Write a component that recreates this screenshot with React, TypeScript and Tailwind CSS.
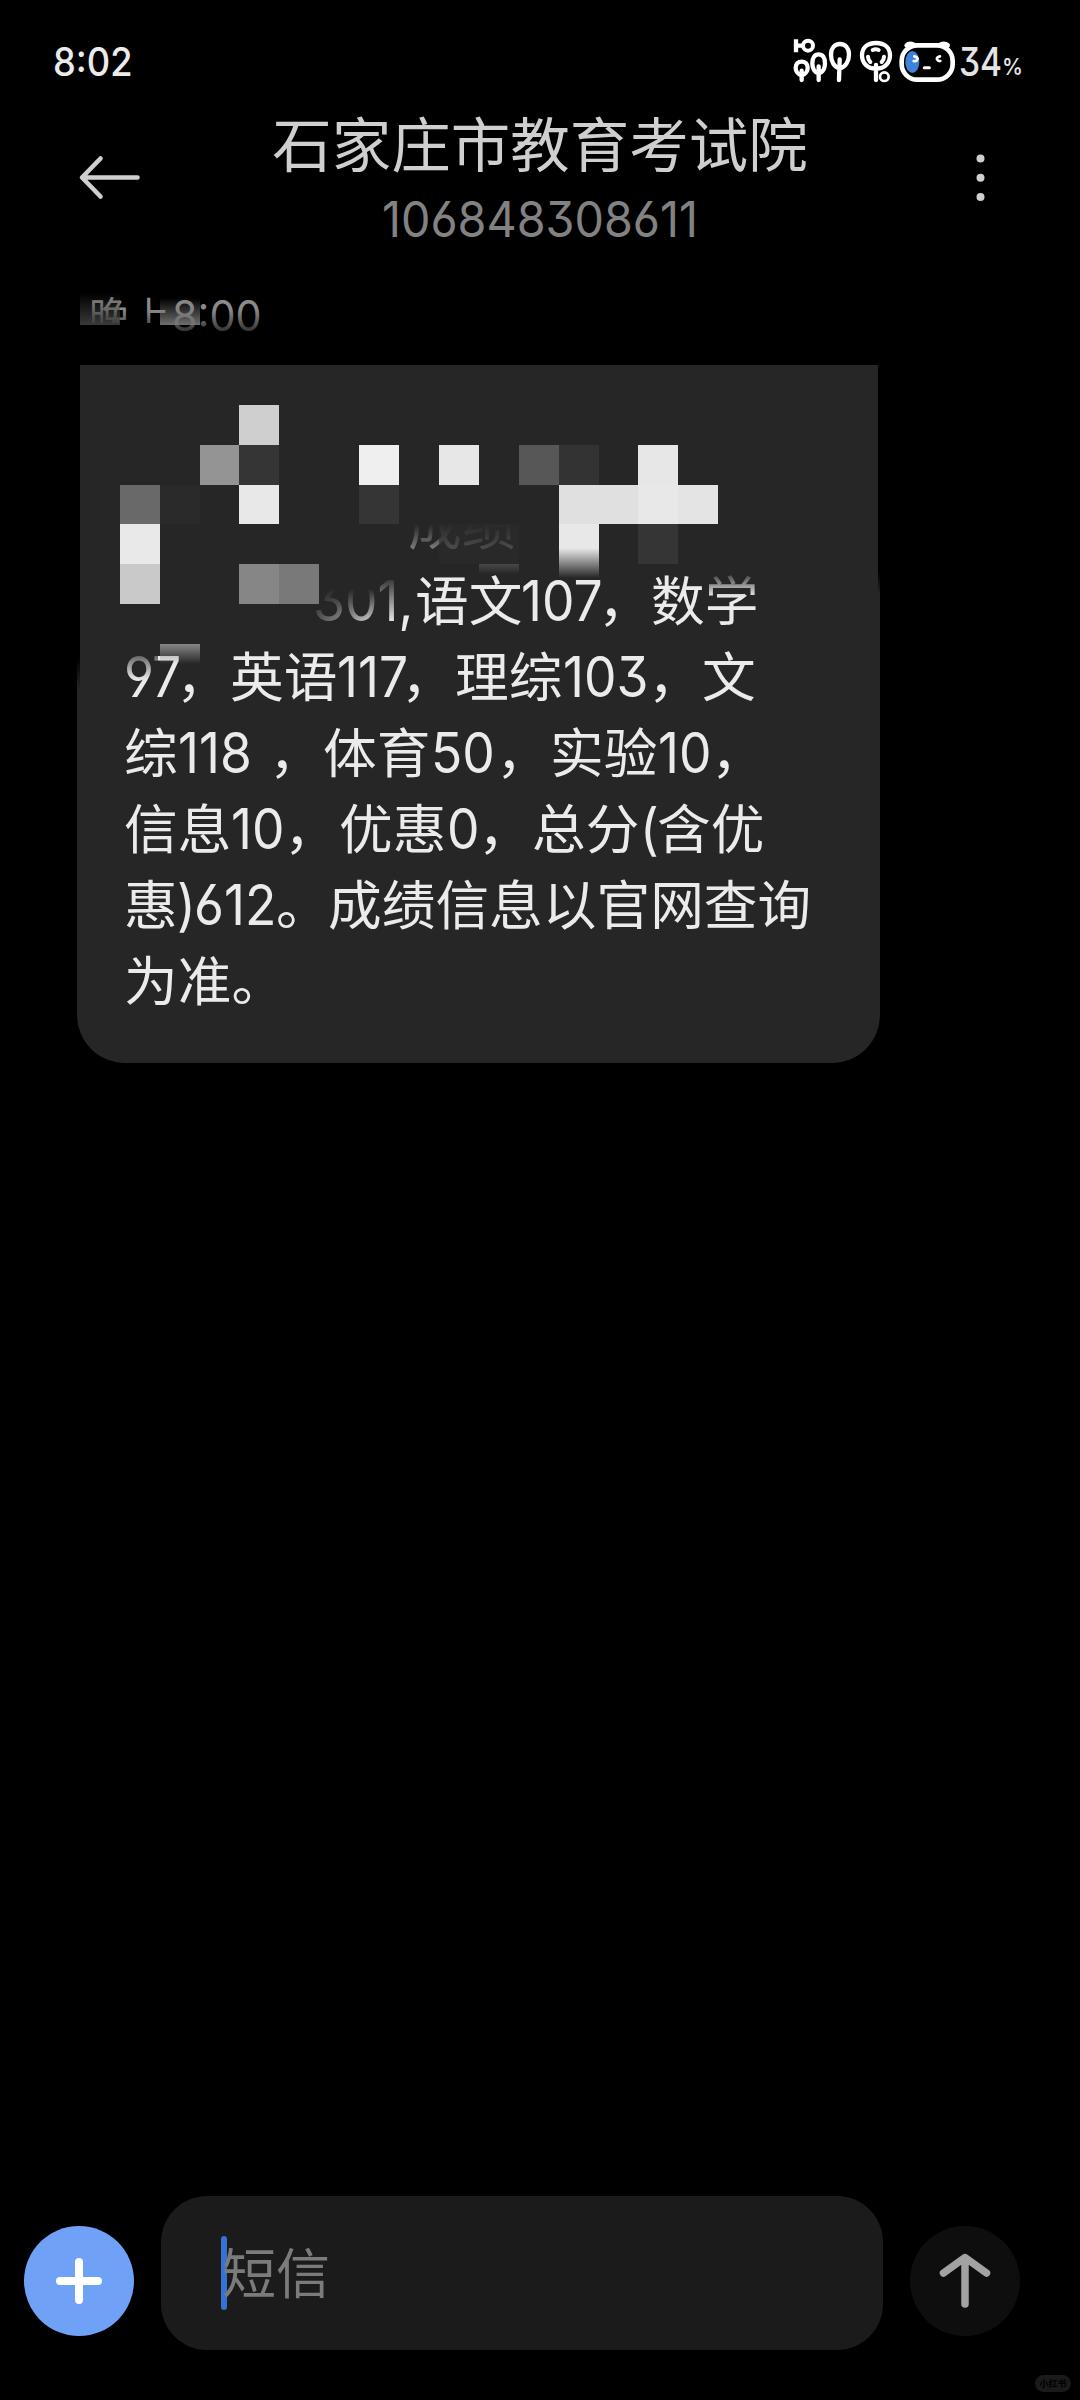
import type { ReactNode } from 'react';
import clsx from 'clsx';

interface Segment {
    text: string;
    width: string;
    latin?: boolean;
}

interface MosaicCell {
    x: number;
    y: number;
    w: number;
    h: number;
    fill: string;
}

const COMMA = '\uff0c';

const MESSAGE_LINES: Segment[][] = [
    [],
    [
        { text: '', width: 'w-[284px]' },
        { text: '成绩', width: 'w-[110px]' }
    ],
    [
        { text: '', width: 'w-[189px]' },
        { text: '301,', width: 'w-[102px]', latin: true },
        { text: '语文', width: 'w-[106px]' },
        { text: '107', width: 'w-[80px]', latin: true },
        { text: COMMA, width: 'w-[50px]' },
        { text: '数学', width: 'w-[110px]' }
    ],
    [
        { text: '97', width: 'w-[55px]', latin: true },
        { text: COMMA, width: 'w-[51px]' },
        { text: '英语', width: 'w-[107px]' },
        { text: '117', width: 'w-[67px]', latin: true },
        { text: COMMA, width: 'w-[51px]' },
        { text: '理综', width: 'w-[108px]' },
        { text: '103', width: 'w-[88px]', latin: true },
        { text: COMMA, width: 'w-[51px]' },
        { text: '文', width: 'w-[54px]' }
    ],
    [
        { text: '综', width: 'w-[54px]' },
        { text: '118', width: 'w-[94px]', latin: true },
        { text: COMMA, width: 'w-[51px]' },
        { text: '体育', width: 'w-[108px]' },
        { text: '50', width: 'w-[68px]', latin: true },
        { text: COMMA, width: 'w-[51px]' },
        { text: '实验', width: 'w-[108px]' },
        { text: '10', width: 'w-[56px]', latin: true },
        { text: COMMA, width: 'w-[51px]' }
    ],
    [
        { text: '信息', width: 'w-[107px]' },
        { text: '10', width: 'w-[56px]', latin: true },
        { text: COMMA, width: 'w-[52px]' },
        { text: '优惠', width: 'w-[108px]' },
        { text: '0', width: 'w-[34px]', latin: true },
        { text: COMMA, width: 'w-[51px]' },
        { text: '总分', width: 'w-[108px]' },
        { text: '(', width: 'w-[17px]', latin: true },
        { text: '含优', width: 'w-[108px]' }
    ],
    [
        { text: '惠', width: 'w-[53px]' },
        { text: ')', width: 'w-[17px]', latin: true },
        { text: '612', width: 'w-[82px]', latin: true },
        { text: '。', width: 'w-[52px]' },
        { text: '成绩信息以官网查询', width: 'w-[490px]' }
    ],
    [{ text: '为准。', width: 'w-[165px]' }]
];

// Coordinates are relative to the bubble's top-left corner (77, 365)
const MOSAIC: MosaicCell[] = [
    { x: 162, y: 40, w: 40, h: 40, fill: '#cfcfcf' },
    { x: 123, y: 80, w: 39, h: 40, fill: '#949494' },
    { x: 162, y: 80, w: 40, h: 40, fill: '#353535' },
    { x: 282, y: 80, w: 40, h: 40, fill: '#efefef' },
    { x: 362, y: 80, w: 40, h: 40, fill: '#e7e7e7' },
    { x: 442, y: 80, w: 40, h: 40, fill: '#575757' },
    { x: 482, y: 80, w: 40, h: 40, fill: '#333333' },
    { x: 561, y: 80, w: 40, h: 40, fill: '#e7e7e7' },
    { x: 43, y: 120, w: 40, h: 39, fill: '#696969' },
    { x: 83, y: 120, w: 40, h: 39, fill: '#2a2a2a' },
    { x: 162, y: 120, w: 40, h: 39, fill: '#e8e8e8' },
    { x: 282, y: 120, w: 40, h: 39, fill: '#353535' },
    { x: 482, y: 120, w: 79, h: 39, fill: '#e0e0e0' },
    { x: 561, y: 120, w: 40, h: 39, fill: '#e8e8e8' },
    { x: 601, y: 120, w: 40, h: 39, fill: '#e4e4e4' },
    { x: 43, y: 159, w: 40, h: 40, fill: '#e9e9e9' },
    { x: 482, y: 159, w: 40, h: 54, fill: 'url(#fadeBright)' },
    { x: 561, y: 159, w: 40, h: 40, fill: '#353535' },
    { x: 43, y: 199, w: 40, h: 40, fill: '#c9c9c9' },
    { x: 162, y: 199, w: 40, h: 40, fill: '#868686' },
    { x: 202, y: 199, w: 40, h: 40, fill: '#797979' },
    { x: 402, y: 199, w: 40, h: 10, fill: 'url(#fadeDim)' },
    { x: 83, y: 279, w: 40, h: 20, fill: 'url(#fadeMid)' }
];

function Digits({ children, className }: { children: ReactNode; className?: string }) {
    return (
        <span
            className={clsx(
                "inline-block origin-left whitespace-nowrap font-['Inter','Noto_Sans_CJK_SC',sans-serif] [font-feature-settings:'cv03','cv04','cv09']",
                className
            )}
        >
            {children}
        </span>
    );
}

function StatusIcons() {
    return (
        <svg width="175" height="80" viewBox="12 0 525 240" fill="none" stroke="#fff" strokeLinecap="round">
            {/* Network label */}
            <path d="M48 58V97M46 77H66" strokeWidth="13" strokeLinecap="butt" />
            <circle cx="84" cy="77" r="15" strokeWidth="12" />

            {/* Signal trees */}
            <g strokeWidth="13">
                <path d="M65 166C53 163 47 152 47 143C47 132 54 125 65 125S83 132 83 143C83 152 77 163 65 166M65 152V180" />
                <path d="M116 160C102 157 97 142 97 130C97 113 104 103 116 103S135 113 135 130C135 142 130 157 116 160M116 139V180" />
                <path d="M179 145C162 142 153 124 153 104C153 84 164 72 180 72S207 84 207 104C207 124 196 142 179 145M179 118L177 180" />
            </g>

            {/* Wi-Fi tree */}
            <path d="M288 180V135M288 146C261 146 246 128 246 106C246 83 262 69 288 69S330 83 330 106C330 128 315 146 288 146" strokeWidth="13" />
            <path d="M278 90Q287 86 296 90M264 110Q264 119 271 126M312 110Q312 119 305 126" strokeWidth="12" />
            <circle cx="313" cy="170" r="13" strokeWidth="8" fill="#000" />

            {/* Battery face */}
            <ellipse cx="397" cy="126" rx="21" ry="33" fill="#3f82dc" stroke="none" />
            <path d="M380 76Q388 68 400 74M482 74Q494 68 503 76" strokeWidth="14" />
            <rect x="365" y="76" width="153" height="103" rx="47" strokeWidth="14" />
            <path d="M403 109Q415 112 412 119Q409 125 401 123M480 109Q468 112 471 118Q474 124 481 123" strokeWidth="8" />
            <path d="M433 143H448" strokeWidth="9" />
        </svg>
    );
}

function StatusBar() {
    return (
        <div className="flex h-[100px] items-start pt-5">
            <Digits className="ml-[53px] w-[731px] scale-x-[0.93] text-[39px] font-medium leading-[84px] text-[#ebebeb]">
                8:02
            </Digits>
            <StatusIcons />
            <Digits className="w-[43px] scale-x-[0.86] text-[39px] font-medium leading-[84px] text-[#e4e4e4]">34</Digits>
            <Digits className="scale-x-[0.92] text-[23px] font-medium leading-[95px] text-[#e4e4e4]">%</Digits>
        </div>
    );
}

function Header() {
    return (
        <header className="flex h-[165px] items-start">
            <svg className="ml-[78px] mt-[54px] shrink-0" width="64" height="48" fill="none" stroke="#cfcfcf" strokeWidth="4.6" strokeLinecap="round" strokeLinejoin="round">
                <path d="M59.5 23.5H4.5M22.5 4.5L4 23.5L22.5 42.5" />
            </svg>
            <div className="ml-[128px] flex w-[540px] flex-col items-center">
                <h1 className="-mt-1 h-[94px] whitespace-nowrap text-[59.5px] font-normal leading-[90px] text-[#cfcfcf]">
                    石家庄市教育考试院
                </h1>
                <Digits className="h-[60px] w-[317px] scale-x-[0.953] text-[49px] leading-[60px] text-[#828282]">
                    106848308611
                </Digits>
            </div>
            <svg className="ml-[162px] mt-[52px]" width="16" height="50" fill="#cfcfcf">
                <circle cx="8.5" cy="6.5" r="4" />
                <circle cx="8.5" cy="25.7" r="4" />
                <circle cx="8.5" cy="45" r="4" />
            </svg>
        </header>
    );
}

function Timestamp() {
    return (
        <div className="relative flex h-[100px] items-baseline pl-[89px] text-[#8a8a8a]">
            <span className="w-[41px] text-[40px] leading-[98px]">晚</span>
            <span className="w-[42px] text-[40px] leading-[98px]">上</span>
            <Digits className="scale-x-[0.96] text-[43px] leading-[98px]">8:00</Digits>
            <svg className="absolute left-[80px] top-0" width="190" height="90">
                <defs>
                    <linearGradient id="timeFade" x1="0" y1="0" x2="0" y2="1">
                        <stop offset="0" stopColor="#000" stopOpacity="0" />
                        <stop offset="1" stopColor="#000" stopOpacity="0.8" />
                    </linearGradient>
                    <linearGradient id="timeBlockA" x1="0" y1="0" x2="0" y2="1">
                        <stop offset="0" stopColor="#404040" stopOpacity="0" />
                        <stop offset="1" stopColor="#404040" stopOpacity="0.9" />
                    </linearGradient>
                    <linearGradient id="timeBlockB" x1="0" y1="0" x2="0" y2="1">
                        <stop offset="0" stopColor="#7a7a7a" stopOpacity="0" />
                        <stop offset="1" stopColor="#7a7a7a" stopOpacity="0.9" />
                    </linearGradient>
                </defs>
                <rect x="0" y="45" width="190" height="27" fill="url(#timeFade)" />
                <rect x="0" y="58" width="90" height="30" fill="#000" />
                <rect x="0" y="28" width="40" height="32" fill="url(#timeBlockA)" />
                <rect x="80" y="33" width="40" height="27" fill="url(#timeBlockB)" />
            </svg>
        </div>
    );
}

function MosaicOverlay() {
    return (
        <svg className="absolute left-0 top-0" width="803" height="340" shapeRendering="crispEdges">
            <defs>
                <linearGradient id="fadeBright" x1="0" y1="0" x2="0" y2="1">
                    <stop offset="0.45" stopColor="#e8e8e8" />
                    <stop offset="1" stopColor="#262626" />
                </linearGradient>
                <linearGradient id="fadeDim" x1="0" y1="0" x2="0" y2="1">
                    <stop offset="0" stopColor="#484848" />
                    <stop offset="1" stopColor="#262626" />
                </linearGradient>
                <linearGradient id="fadeMid" x1="0" y1="0" x2="0" y2="1">
                    <stop offset="0" stopColor="#868686" />
                    <stop offset="1" stopColor="#868686" stopOpacity="0" />
                </linearGradient>
                <linearGradient id="cover" x1="0" y1="0" x2="0" y2="1">
                    <stop offset="0" stopColor="#262626" />
                    <stop offset="1" stopColor="#262626" stopOpacity="0" />
                </linearGradient>
                <linearGradient id="coverSide" x1="0" y1="0" x2="1" y2="0">
                    <stop offset="0" stopColor="#262626" stopOpacity="0.8" />
                    <stop offset="1" stopColor="#262626" stopOpacity="0" />
                </linearGradient>
                <linearGradient id="edge" x1="0" y1="0" x2="0" y2="1">
                    <stop offset="0.9" stopColor="#000" />
                    <stop offset="1" stopColor="#000" stopOpacity="0" />
                </linearGradient>
            </defs>

            {/* Square shoulders of the covered area */}
            <rect x="0" y="0" width="3" height="325" fill="url(#edge)" />
            <rect x="801" y="0" width="2" height="230" fill="url(#edge)" />

            {/* Half-hidden text */}
            <rect x="325" y="119" width="130" height="40" fill="#262626" />
            <rect x="325" y="159" width="130" height="40" fill="#262626" fillOpacity="0.55" />
            <rect x="325" y="159" width="130" height="26" fill="url(#cover)" />
            <rect x="362" y="159" width="80" height="40" fill="#2b2b2b" fillOpacity="0.6" />
            <rect x="235" y="205" width="65" height="19" fill="#262626" />
            <rect x="235" y="224" width="65" height="36" fill="url(#cover)" />
            <rect x="235" y="205" width="65" height="56" fill="url(#coverSide)" />
            <rect x="300" y="210" width="24" height="48" fill="url(#cover)" />
            <rect x="626" y="205" width="70" height="27" fill="url(#cover)" />
            <rect x="45" y="279" width="36" height="36" fill="url(#cover)" />

            {MOSAIC.map((cell) => (
                <rect key={`${cell.x}-${cell.y}`} x={cell.x} y={cell.y} width={cell.w} height={cell.h} fill={cell.fill} />
            ))}
        </svg>
    );
}

function MessageBubble() {
    return (
        <div className="relative ml-[77px] h-[698px] w-[803px] rounded-b-[48px] bg-[#262626] pl-[47px] pt-[43px] text-[#ebebeb]">
            {MESSAGE_LINES.map((line, index) => (
                <div key={index} className="flex h-[76px] items-baseline whitespace-nowrap">
                    {line.map((segment, i) =>
                        segment.latin ? (
                            <Digits key={i} className={clsx('shrink-0 text-[56px] leading-[76px]', segment.width)}>
                                <span className="inline-block origin-left scale-x-[0.92]">{segment.text}</span>
                            </Digits>
                        ) : (
                            <span
                                key={i}
                                className={clsx(
                                    'shrink-0 text-[53.7px] leading-[76px]',
                                    segment.width,
                                    segment.text === COMMA && '-ml-[3px] mr-[3px]'
                                )}
                            >
                                {segment.text}
                            </span>
                        )
                    )}
                </div>
            ))}
            <MosaicOverlay />
        </div>
    );
}

function Composer() {
    return (
        <footer className="flex h-[154px] items-start pl-6">
            <button type="button" className="mt-[30px] flex h-[110px] w-[110px] items-center justify-center rounded-full bg-[#6fa1f6]">
                <svg width="56" height="56" stroke="#fff" strokeWidth="8" strokeLinecap="round">
                    <path d="M9 28H47M28 9V47" />
                </svg>
            </button>
            <div className="ml-[27px] flex h-[154px] w-[722px] items-start rounded-[46px] bg-[#1b1b1b] pl-[60px]">
                <span className="mt-[40px] h-[74px] w-[6px] rounded-sm bg-[#3572d4]" />
                <span className="-ml-[5px] mt-[37px] text-[54px] leading-[76px] text-[#7b7b7b]">短信</span>
            </div>
            <button type="button" className="ml-[27px] mt-[30px] flex h-[110px] w-[110px] items-center justify-center rounded-full bg-[#0e0e0e]">
                <svg width="60" height="64" fill="none" stroke="#a2a2a2" strokeWidth="7.5" strokeLinecap="round" strokeLinejoin="round">
                    <path d="M30 55V9M8.500 24L30 8.500L51.500 24" />
                </svg>
            </button>
        </footer>
    );
}

export default function App() {
    return (
        <div
            lang="zh-CN"
            className="relative flex h-[2400px] w-[1080px] flex-col overflow-hidden bg-black font-['Noto_Sans_CJK_SC',sans-serif]"
        >
            <StatusBar />
            <Header />
            <Timestamp />
            <MessageBubble />
            <div className="h-[1133px] shrink-0" />
            <Composer />
            <span className="absolute left-[1035px] top-[2375px] flex h-[17px] w-[36px] items-center justify-center rounded-full bg-[#1a1a1a] text-[9px] font-bold leading-none text-black">
                小红书
            </span>
        </div>
    );
}
